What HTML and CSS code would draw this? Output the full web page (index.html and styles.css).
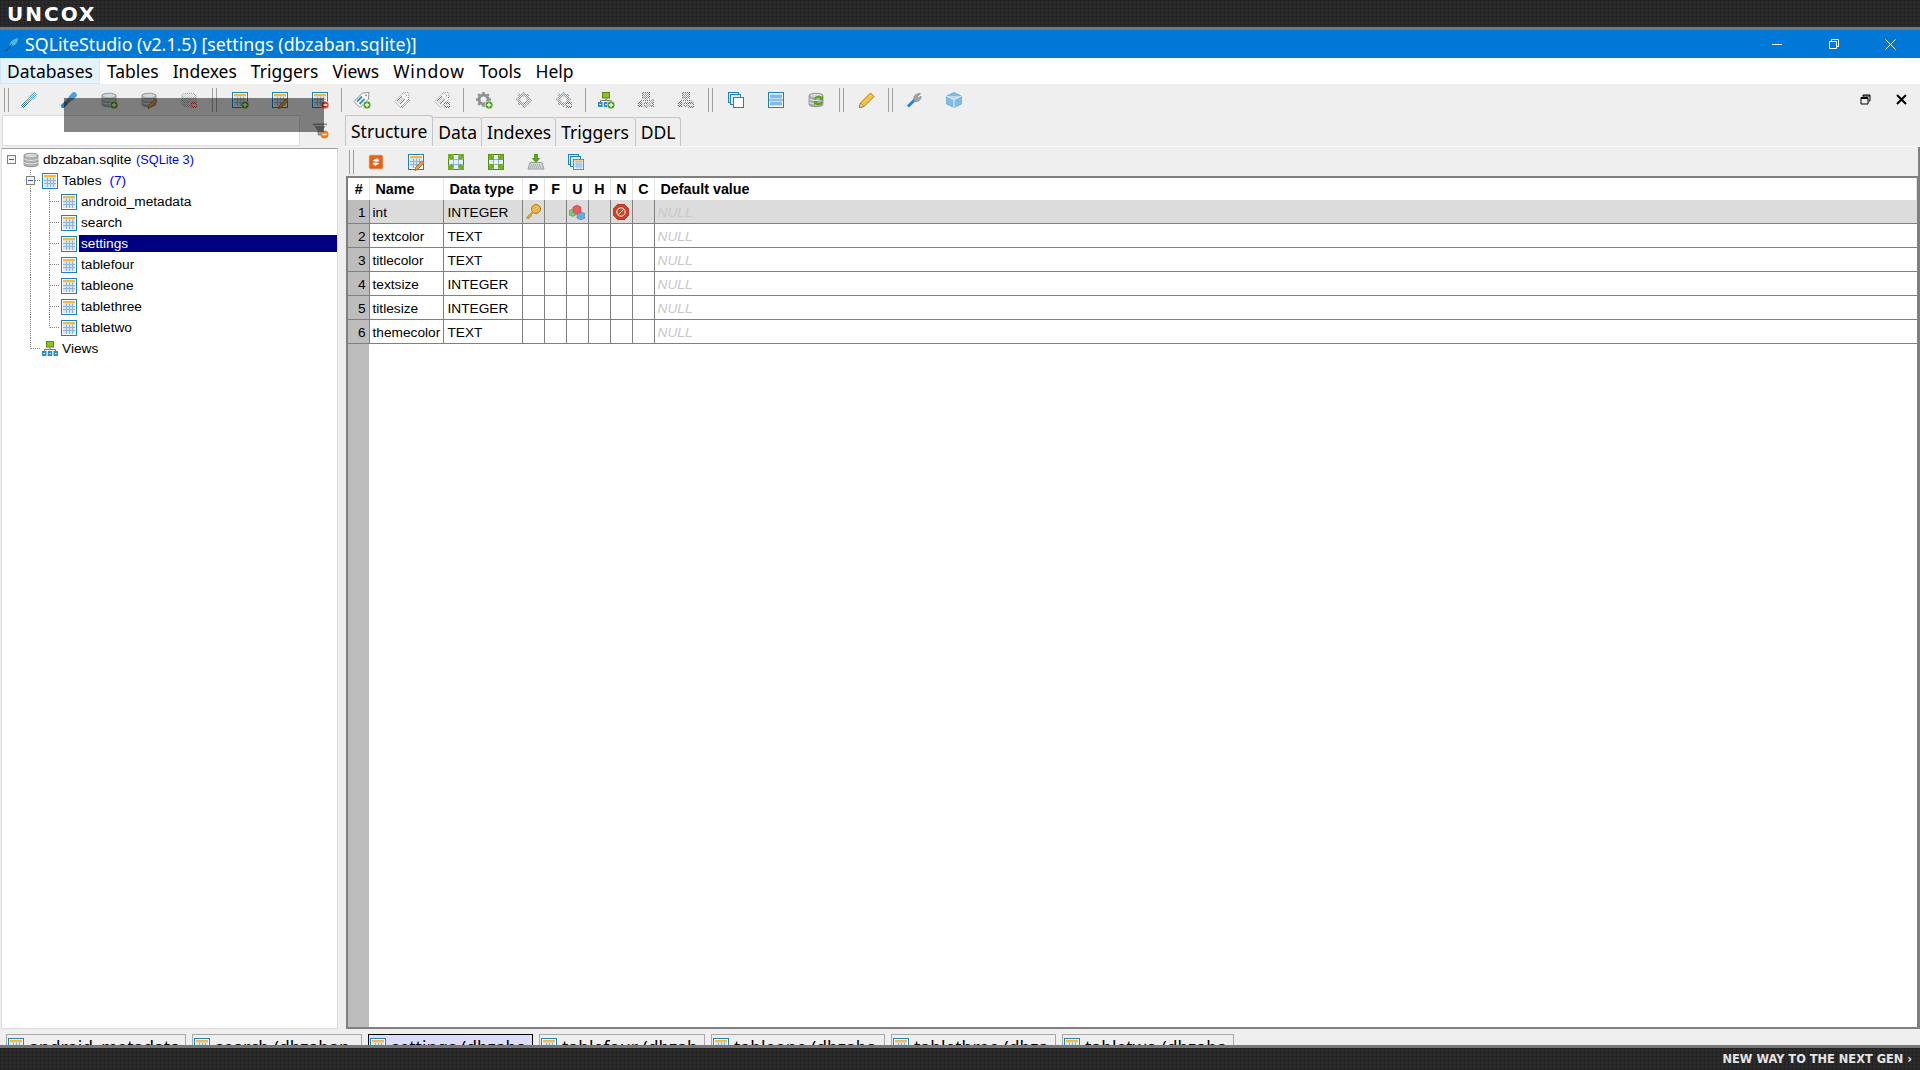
FILE: index.html
```html
<!DOCTYPE html>
<html>
<head>
<meta charset="utf-8">
<title>SQLiteStudio (v2.1.5) [settings (dbzaban.sqlite)]</title>
<link rel="stylesheet" href="styles.css">
</head>
<body>

<svg class="defs" width="0" height="0">
<defs>
<symbol id="table" viewBox="0 0 16 16">
  <rect x=".5" y=".5" width="15" height="15" fill="#fff" stroke="#1b83b8"/>
  <rect x="2" y="2" width="12" height="2.500" fill="#f4b93f"/>
  <path d="M2 4.500h12V14H2z" fill="#d6e6f5"/>
  <path d="M2 7.500h12M2 10.500h12M5.500 4.500V14M8.500 4.500V14M11.500 4.500V14" stroke="#8fb4d8" fill="none"/>
</symbol>
<symbol id="db" viewBox="0 0 16 16">
  <path d="M1 3.500C1 .5 15 .5 15 3.500v9c0 3-14 3-14 0z" fill="#a9adb0" stroke="#85898c" stroke-width=".8"/>
  <path d="M1 6.500c0 2.500 14 2.500 14 0M1 10c0 2.500 14 2.500 14 0" stroke="#e6e8e9" fill="none"/>
  <ellipse cx="8" cy="3.500" rx="6" ry="1.800" fill="#d5d8da"/>
</symbol>
<symbol id="view" viewBox="0 0 16 16">
  <rect x="4.500" y=".5" width="7" height="5.500" fill="#8cc21a" stroke="#5e8a0f"/>
  <path d="M8 6v3M2.500 10V8.500h11V10" stroke="#777" fill="none"/>
  <rect x="0" y="10" width="4.500" height="5" fill="#2f8ccb"/>
  <rect x="5.750" y="10" width="4.500" height="5" fill="#2f8ccb"/>
  <rect x="11.500" y="10" width="4.500" height="5" fill="#2f8ccb"/>
  <path d="M1.500 12.500h1.500M7.300 12.500h1.500M13 12.500h1.500" stroke="#fff"/>
</symbol>
<symbol id="tag" viewBox="0 0 16 16">
  <path d="M0 9.500 8.500 1 15 .5 14.500 7 6 15.500z" fill="#fff" stroke="#8b8f92"/>
  <path d="M3 9.500 8 4.500M5.500 12 10.500 7" stroke="#2f8ccb" stroke-width="1.800"/>
  <circle cx="12" cy="3.500" r="1" fill="#8b8f92"/>
</symbol>
<symbol id="gear" viewBox="0 0 16 16">
  <circle cx="7.500" cy="7.500" r="4.500" fill="none" stroke="#8e9194" stroke-width="3"/>
  <path d="M7.500 0v15M0 7.500h15M2.200 2.200 12.800 12.800M12.800 2.200 2.200 12.800" stroke="#8e9194" stroke-width="2.400" stroke-dasharray="2.400 10.200"/>
</symbol>
<symbol id="plug" viewBox="0 0 16 16">
  <path d="M2 14 5 11" stroke="#2d7fbd" stroke-width="4" stroke-linecap="round"/>
  <path d="M6 10 9 7" stroke="#84888b" stroke-width="4"/>
  <path d="M10.500 5.500 13 3" stroke="#4da0e0" stroke-width="5.500" stroke-linecap="round"/>
</symbol>
<symbol id="b-add" viewBox="0 0 16 16">
  <circle cx="13" cy="13" r="4" fill="#4a9a16" stroke="#fff" stroke-width=".6"/>
  <path d="M13 10.800v4.400M10.800 13h4.400" stroke="#fff" stroke-width="1.300"/>
</symbol>
<symbol id="b-del" viewBox="0 0 16 16">
  <circle cx="13" cy="13" r="4" fill="#e23b2a" stroke="#fff" stroke-width=".6"/>
  <path d="M10.800 13h4.400" stroke="#fff" stroke-width="1.500"/>
</symbol>
<symbol id="b-edit" viewBox="0 0 16 16">
  <path d="M7 16.500 7.500 13.500 14 7l2 2-6.500 6.500z" fill="#f0a42c" stroke="#8d5a14" stroke-width=".7"/>
  <path d="M14 7l2 2" stroke="#b66cc0" stroke-width="1.500"/>
</symbol>
<symbol id="b-orange-del" viewBox="0 0 16 16">
  <circle cx="11.500" cy="11.500" r="4" fill="#ee7a1e"/>
  <path d="M9.300 11.500h4.400" stroke="#fff" stroke-width="1.500"/>
</symbol>
<symbol id="wins" viewBox="0 0 16 16">
  <rect x=".5" y=".5" width="10" height="10" fill="#d9ecf8" stroke="#1b83b8"/>
  <rect x="2.500" y="2.500" width="10" height="10" fill="#d9ecf8" stroke="#1b83b8"/>
  <rect x="5.500" y="5.500" width="10" height="10" fill="#fff" stroke="#1b83b8"/>
</symbol>
<symbol id="split" viewBox="0 0 16 16">
  <rect x=".5" y=".5" width="15" height="15" fill="#fff" stroke="#1b83b8"/>
  <path d="M2 2.500h12v4H2zM2 9.500h12v4H2z" fill="#7fbde4"/>
  <path d="M1 8h14" stroke="#1b83b8"/>
</symbol>
<symbol id="dbsync" viewBox="0 0 16 16">
  <use href="#db"/>
  <path d="M6 7c1-4 6-4 8-2l1-1.500V8h-4l1.200-1.200C10.500 5.500 8 6 7.500 8zM15 10c-1 4-6 4-8 2l-1 1.500V9h4L8.800 10.200C10.500 11.500 13 11 13.500 9z" fill="#5aa51c"/>
</symbol>
<symbol id="pencil" viewBox="0 0 16 16">
  <path d="M.5 15.500 1.500 11 11.500 1 15 4.500 5 14.500z" fill="#f7c544" stroke="#b5761a"/>
  <path d="M.5 15.500 1.500 11 5 14.500z" fill="#f3dcae" stroke="#8d5a14" stroke-width=".6"/>
</symbol>
<symbol id="wrench" viewBox="0 0 16 16">
  <path d="M2 14.500 8.500 8" stroke="#2d86c9" stroke-width="3"/>
  <path d="M8 8.500C6.800 5 9.500 1 14.500 1.500L11.500 4.500l1 1.500 2.500-2c.5 3.500-3 6.500-6.200 5.200z" fill="#a4a7aa" stroke="#77797c" stroke-width=".6"/>
</symbol>
<symbol id="cube" viewBox="0 0 16 16">
  <path d="M8 .5 15.500 4v8L8 15.500.5 12V4z" fill="#7fbde4" stroke="#5ea5d3" stroke-width=".7"/>
  <path d="M.5 4 8 7.500 15.500 4" fill="#b5daf2" stroke="#e8f4fb"/>
  <path d="M8 7.500v8" stroke="#e8f4fb"/>
</symbol>
<symbol id="sync" viewBox="0 0 16 16">
  <rect x="1" y="1" width="14" height="14" rx="1.500" fill="#e4621a" stroke="#f6c48e" stroke-width=".7"/>
  <path d="M4.500 6.500 9.500 4v1.500h2l-1 2H7zM11.500 9.500 6.500 12v-1.500h-2l1-2H9z" fill="#fff"/>
</symbol>
<symbol id="grid" viewBox="0 0 16 16">
  <rect x=".5" y=".5" width="15" height="15" fill="#e3eef8" stroke="#4b8a12"/>
  <path d="M1 5.500h14M1 10.500h14M5.500 1v14M10.500 1v14" stroke="#8fb4d8"/>
</symbol>
<symbol id="corners-out" viewBox="0 0 16 16">
  <path d="M0 0h6L4.500 1.800 6 4 4 6 1.800 4.500 0 6zM16 0v6l-1.800-1.500L12 6l-2-2 1.500-2.200L10 0zM0 16v-6l1.800 1.500L4 10l2 2-1.500 2.200L6 16zM16 16h-6l1.500-1.800L10 12l2-2 2.200 1.500L16 10z" fill="#72ad1c"/>
</symbol>
<symbol id="corners-in" viewBox="0 0 16 16">
  <path d="M6 6H0l1.800-1.500L0 2 2 0l2.500 1.800L6 0zM10 6V0l1.500 1.800L14 0l2 2-1.800 2.500L16 6zM6 10v6l-1.500-1.800L2 16l-2-2 1.800-2.500L0 10zM10 10h6l-1.800 1.500L16 14l-2 2-2.500-1.800L10 16z" fill="#72ad1c"/>
</symbol>
<symbol id="keyboard" viewBox="0 0 16 16">
  <path d="M2 8.500h12l2 6.500H0z" fill="#d2d4d6" stroke="#8b8f92" stroke-width=".8"/>
  <path d="M3 11h10M2 13h12" stroke="#8b8f92" stroke-dasharray="1 1"/>
  <path d="M6 0h4v4h2.500L8 9 3.500 4H6z" fill="#5aa51c"/>
</symbol>
<symbol id="key" viewBox="0 0 16 16">
  <circle cx="11" cy="5" r="4.500" fill="#f2b84b" stroke="#b5761a"/>
  <circle cx="12" cy="4" r="1.200" fill="#fff3d6" stroke="#b5761a" stroke-width=".5"/>
  <path d="M8 8 1.500 14.500M3 13l1.500 1.500M5 11l1.500 1.500" stroke="#d9972d" stroke-width="2"/>
</symbol>
<symbol id="cubes" viewBox="0 0 16 16">
  <path d="M0 6.500 3.500 5 7 6.500V11l-3.500 1.500L0 11z" fill="#7ec27a" stroke="#4f8f4b" stroke-width=".5"/>
  <path d="M8 9.500l4-1.500 4 1.500V14l-4 2-4-2z" fill="#6ea9dc" stroke="#3d78ab" stroke-width=".5"/>
  <path d="M4 3l4-2 4 2V8l-4 2-4-2z" fill="#ea5a5f" stroke="#b8383d" stroke-width=".5"/>
</symbol>
<symbol id="nono" viewBox="0 0 16 16">
  <path d="M5 0h6l5 5v6l-5 5H5l-5-5V5z" fill="#d33f1e" stroke="#8c2710" stroke-width=".6"/>
  <circle cx="8" cy="8" r="4.200" fill="none" stroke="#fff" stroke-width="1"/>
  <path d="M5.500 10.500 10.500 5.500" stroke="#fff"/>
</symbol>
<symbol id="funnel" viewBox="0 0 16 16">
  <path d="M0 1h14L9 7v5H5V7z" fill="#9a9d9f" stroke="#6e7173" stroke-width=".7"/>
  <path d="M1 2.500h12" stroke="#e2e4e6"/>
</symbol>
<symbol id="feather" viewBox="0 0 16 16">
  <path d="M5 11C5 6 9 2 15 1c0 6-4 9-8 9z" fill="#53b6d9"/>
  <path d="M1 16 8 8" stroke="#103a55"/>
</symbol>
</defs>
</svg>

<div class="page">

<div class="band band_top"><span class="logo">UNCOX</span></div>

<div class="titlebar">
  <svg class="ti_ico"><use href="#feather"/></svg>
  <span class="ti_txt">SQLiteStudio (v2.1.5) [settings (dbzaban.sqlite)]</span>
  <div class="winbtns">
    <div class="winbtn"><svg width="10" height="10" viewBox="0 0 10 10"><path d="M0 5.500h10" stroke="#fff"/></svg></div>
    <div class="winbtn"><svg width="10" height="10" viewBox="0 0 10 10"><path d="M.5 2.500h7v7h-7zM2.500 2.500v-2h7v7h-2" fill="none" stroke="#fff"/></svg></div>
    <div class="winbtn"><svg width="11" height="11" viewBox="0 0 11 11"><path d="M.5.500l10 10M10.500.500l-10 10" stroke="#fff"/></svg></div>
  </div>
</div>

<div class="menubar">
  <div class="mnu mnu_on">Databases</div>
  <div class="mnu">Tables</div>
  <div class="mnu">Indexes</div>
  <div class="mnu">Triggers</div>
  <div class="mnu">Views</div>
  <div class="mnu mnu_w">Window</div>
  <div class="mnu">Tools</div>
  <div class="mnu">Help</div>
</div>

<div class="work">

  <div class="tbar">
    <i class="grip"></i>
    <div class="tb off"><svg><use href="#plug"/></svg></div>
    <div class="tb"><svg><use href="#plug"/></svg></div>
    <div class="tb"><svg><use href="#db"/><use href="#b-add"/></svg></div>
    <div class="tb"><svg><use href="#db"/><use href="#b-edit"/></svg></div>
    <div class="tb off"><svg><use href="#db"/><use href="#b-del"/></svg></div>
    <i class="grip gap"></i>
    <div class="tb"><svg><use href="#table"/><use href="#b-add"/></svg></div>
    <div class="tb"><svg><use href="#table"/><use href="#b-edit"/></svg></div>
    <div class="tb"><svg><use href="#table"/><use href="#b-del"/></svg></div>
    <i class="thin"></i>
    <div class="tb"><svg><use href="#tag"/><use href="#b-add"/></svg></div>
    <div class="tb off"><svg><use href="#tag"/><use href="#b-edit"/></svg></div>
    <div class="tb off"><svg><use href="#tag"/><use href="#b-del"/></svg></div>
    <i class="thin"></i>
    <div class="tb"><svg><use href="#gear"/><use href="#b-add"/></svg></div>
    <div class="tb off"><svg><use href="#gear"/><use href="#b-edit"/></svg></div>
    <div class="tb off"><svg><use href="#gear"/><use href="#b-del"/></svg></div>
    <i class="thin"></i>
    <div class="tb"><svg><use href="#view"/><use href="#b-add"/></svg></div>
    <div class="tb off"><svg><use href="#view"/><use href="#b-edit"/></svg></div>
    <div class="tb off"><svg><use href="#view"/><use href="#b-del"/></svg></div>
    <i class="grip gap gap_v"></i>
    <div class="tb"><svg><use href="#wins"/></svg></div>
    <div class="tb"><svg><use href="#split"/></svg></div>
    <div class="tb"><svg><use href="#dbsync"/></svg></div>
    <i class="grip gap"></i>
    <div class="tb"><svg><use href="#pencil"/></svg></div>
    <i class="grip gap gap_n"></i>
    <div class="tb"><svg><use href="#wrench"/></svg></div>
    <div class="tb"><svg><use href="#cube"/></svg></div>
    <div class="mdi">
      <div class="mdibtn"><svg width="11" height="11" viewBox="0 0 11 11"><path d="M3 2.500V1h7v6H8.500" fill="none" stroke="#000"/><path d="M1 3.500h7v6.500H1z" fill="none" stroke="#000"/><path d="M3 2h7M1 4.500h7" stroke="#000"/></svg></div>
      <div class="mdibtn"><svg width="11" height="11" viewBox="0 0 11 11"><path d="M1 1l9 9M10 1l-9 9" stroke="#000" stroke-width="2"/></svg></div>
    </div>
  </div>

  <div class="panes">

    <div class="left">
      <div class="flt">
        <div class="flt_in"></div>
        <svg class="flt_ico"><use href="#funnel"/><use href="#b-orange-del"/></svg>
      </div>
      <div class="tree">
        <div class="row"><span class="c"><b class="exp"></b></span><span class="c"><svg><use href="#db"/></svg></span><span class="lbl">dbzaban.sqlite <em class="em_db">(SQLite 3)</em></span></div>
        <div class="row"><span class="c"></span><span class="c tt"><b class="exp"></b></span><span class="c"><svg><use href="#table"/></svg></span><span class="lbl">Tables <em>(7)</em></span></div>
        <div class="row"><span class="c"></span><span class="c tv"></span><span class="c tt"></span><span class="c"><svg><use href="#table"/></svg></span><span class="lbl">android_metadata</span></div>
        <div class="row"><span class="c"></span><span class="c tv"></span><span class="c tt"></span><span class="c"><svg><use href="#table"/></svg></span><span class="lbl">search</span></div>
        <div class="row"><span class="c"></span><span class="c tv"></span><span class="c tt"></span><span class="c"><svg><use href="#table"/></svg></span><span class="lbl_sel">settings</span></div>
        <div class="row"><span class="c"></span><span class="c tv"></span><span class="c tt"></span><span class="c"><svg><use href="#table"/></svg></span><span class="lbl">tablefour</span></div>
        <div class="row"><span class="c"></span><span class="c tv"></span><span class="c tt"></span><span class="c"><svg><use href="#table"/></svg></span><span class="lbl">tableone</span></div>
        <div class="row"><span class="c"></span><span class="c tv"></span><span class="c tt"></span><span class="c"><svg><use href="#table"/></svg></span><span class="lbl">tablethree</span></div>
        <div class="row"><span class="c"></span><span class="c tv"></span><span class="c te"></span><span class="c"><svg><use href="#table"/></svg></span><span class="lbl">tabletwo</span></div>
        <div class="row"><span class="c"></span><span class="c te"></span><span class="c"><svg><use href="#view"/></svg></span><span class="lbl">Views</span></div>
      </div>
    </div>

    <div class="right">
      <div class="tabs">
        <div class="tab tab_on">Structure</div>
        <div class="tab">Data</div>
        <div class="tab">Indexes</div>
        <div class="tab tab_tr">Triggers</div>
        <div class="tab">DDL</div>
      </div>
      <div class="tbar2">
        <i class="grip"></i>
        <div class="tb"><svg><use href="#sync"/></svg></div>
        <div class="tb"><svg><use href="#table"/><use href="#b-edit"/></svg></div>
        <div class="tb"><svg><use href="#grid"/><use href="#corners-out"/></svg></div>
        <div class="tb"><svg><use href="#grid"/><use href="#corners-in"/></svg></div>
        <div class="tb"><svg><use href="#keyboard"/></svg></div>
        <div class="tb"><svg><use href="#wins"/><use href="#table" x="5" y="5" width="11" height="11"/></svg></div>
      </div>
      <div class="frame">
        <table class="cols">
          <colgroup><col class="c_n"><col class="c_name"><col class="c_type"><col class="c_f"><col class="c_f"><col class="c_f"><col class="c_f"><col class="c_f"><col class="c_f"><col></colgroup>
          <thead><tr><th class="ctr">#</th><th>Name</th><th>Data type</th><th class="ctr">P</th><th class="ctr">F</th><th class="ctr">U</th><th class="ctr">H</th><th class="ctr">N</th><th class="ctr">C</th><th>Default value</th></tr></thead>
          <tbody>
            <tr class="cur"><td class="n">1</td><td>int</td><td>INTEGER</td><td class="ic"><svg><use href="#key"/></svg></td><td></td><td class="ic"><svg><use href="#cubes"/></svg></td><td></td><td class="ic"><svg><use href="#nono"/></svg></td><td></td><td class="nul">NULL</td></tr>
            <tr><td class="n">2</td><td>textcolor</td><td>TEXT</td><td></td><td></td><td></td><td></td><td></td><td></td><td class="nul">NULL</td></tr>
            <tr><td class="n">3</td><td>titlecolor</td><td>TEXT</td><td></td><td></td><td></td><td></td><td></td><td></td><td class="nul">NULL</td></tr>
            <tr><td class="n">4</td><td>textsize</td><td>INTEGER</td><td></td><td></td><td></td><td></td><td></td><td></td><td class="nul">NULL</td></tr>
            <tr><td class="n">5</td><td>titlesize</td><td>INTEGER</td><td></td><td></td><td></td><td></td><td></td><td></td><td class="nul">NULL</td></tr>
            <tr><td class="n">6</td><td>themecolor</td><td>TEXT</td><td></td><td></td><td></td><td></td><td></td><td></td><td class="nul">NULL</td></tr>
          </tbody>
        </table>
      </div>
    </div>

  </div>

  <div class="wtabs">
    <div class="wt wt1"><svg><use href="#table"/></svg><span>android_metadata</span></div>
    <div class="wt wt2"><svg><use href="#table"/></svg><span>search (dbzaban</span></div>
    <div class="wt wt3 wt_on"><svg><use href="#table"/></svg><span>settings (dbzaba</span></div>
    <div class="wt wt4"><svg><use href="#table"/></svg><span>tablefour (dbzab</span></div>
    <div class="wt wt5"><svg><use href="#table"/></svg><span>tableone (dbzaba</span></div>
    <div class="wt wt6"><svg><use href="#table"/></svg><span>tablethree (dbza</span></div>
    <div class="wt wt7"><svg><use href="#table"/></svg><span>tabletwo (dbzaba</span></div>
  </div>

</div>

<div class="band band_btm"><span class="tagline">NEW WAY TO THE NEXT GEN ›</span></div>

<div class="shade"></div>

</div>

</body>
</html>
```
FILE: styles.css
```css
html, body {margin:0;padding:0;height:100%;overflow:hidden}
body {font-family:"Liberation Sans",Arial,sans-serif;font-size:13.7px;color:#000;background:#efefef}

.defs {position:absolute}
symbol {overflow:visible}
.page {position:relative;height:1070px;display:flex;flex-direction:column;overflow:hidden}

.band {flex:none;background-color:#2c2c2c;
  background-image:linear-gradient(#232323 1px,transparent 1px),linear-gradient(90deg,#232323 1px,transparent 1px);
  background-size:4px 4px;color:#fff;display:flex;align-items:center}
.band_top {height:27px;border-bottom:3px solid #777;padding-left:7px}
.band_btm {height:22px;border-top:3px solid #777;justify-content:flex-end;padding-right:8px}
.logo {font-family:"DejaVu Sans",sans-serif;font-weight:bold;font-size:20px;letter-spacing:2px;line-height:1}
.tagline {font-family:"DejaVu Sans",sans-serif;font-weight:bold;font-size:11.4px;color:#e4e4e4;white-space:nowrap}

.titlebar {flex:none;height:28px;background:#0078d7;color:#fff;display:flex;align-items:center;padding-left:5px}
.ti_ico {width:14px;height:16px;flex:none}
.ti_txt {font-family:"Noto Sans",sans-serif;font-size:17.8px;margin-left:6px;white-space:nowrap}
.winbtns {margin-left:auto;display:flex;padding-right:1px}
.winbtn {width:57px;height:28px;display:flex;align-items:center;justify-content:center}

.menubar {flex:none;height:26px;background:#fff;display:flex;font-family:"Noto Sans",sans-serif;font-size:17.5px}
.mnu {padding:0 6px;line-height:25px;border:1px solid transparent;white-space:nowrap}
.mnu_on {background:#e5f3ff;border-color:#cce8ff}
.mnu_w {letter-spacing:.9px}

.work {flex:1;min-height:0;display:flex;flex-direction:column;background:#efefef}

.tbar {flex:none;height:31px;display:flex;align-items:center;padding-left:3px}
.tb {width:40px;height:28px;flex:none;display:flex;align-items:center;justify-content:center}
.tb svg {width:16px;height:16px;overflow:visible}
.off svg {-webkit-mask-image:conic-gradient(#000 25%,transparent 0 50%,#000 0 75%,transparent 0);mask-image:conic-gradient(#000 25%,transparent 0 50%,#000 0 75%,transparent 0);
  -webkit-mask-size:2px 2px;mask-size:2px 2px}
.grip {flex:none;width:3px;height:24px;border-left:1px solid #a0a0a0;border-right:1px solid #a0a0a0;margin-left:1px}
.grip.gap {margin:0 3px}
.grip.gap_v {margin:0 3px 0 2px}
.grip.gap_n {margin:0 1px}
.thin {flex:none;width:1px;height:24px;background:#a0a0a0;margin:0 .5px}
.mdi {margin-left:auto;display:flex;padding-right:1px}
.mdibtn {width:36px;height:28px;display:flex;align-items:center;justify-content:center}

.panes {flex:1;min-height:0;display:flex}

.left {flex:none;width:342px;display:flex;flex-direction:column;padding-bottom:5px;box-sizing:border-box}
.flt {flex:none;height:33px;display:flex;align-items:flex-start;padding-left:2px}
.flt_in {width:298px;height:31px;background:#fff;box-sizing:border-box;border:1px solid #dcdcdc}
.flt_ico {width:16px;height:16px;margin:8px 0 0 13px;overflow:visible}
.tree {flex:1;margin:0 4px 0 1px;background:#fff;border:1px solid #dcdcdc;border-top-color:#a0a0a0}

.row {height:21px;display:flex;align-items:center}
.c {flex:none;width:19px;height:100%;display:flex;align-items:center;justify-content:center;
  --dot:repeating-linear-gradient(#808080 0 1px,transparent 1px 2px);
  --hdot:repeating-linear-gradient(90deg,#808080 0 1px,transparent 1px 2px)}
.c svg {width:16px;height:16px}
.tv {background:var(--dot) no-repeat 9px 0/1px 100%}
.tt {background:var(--dot) no-repeat 9px 0/1px 100%,var(--hdot) no-repeat 10px 50%/9px 1px}
.te {background:var(--dot) no-repeat 9px 0/1px 50%,var(--hdot) no-repeat 10px 50%/9px 1px}
.exp {width:9px;height:9px;box-sizing:border-box;border:1px solid #808080;background:linear-gradient(#3a5da8,#3a5da8) no-repeat center/5px 1px,#f4f4f4}
.lbl {margin-left:3px;white-space:nowrap}
.lbl em {font-style:normal;color:#0000ff;margin-left:4px}
.lbl em.em_db {margin-left:1px;font-size:12.7px}
.lbl_sel {flex:1;margin-left:1px;height:17px;line-height:17px;padding-left:2px;background:#000080;color:#fff}

.right {flex:1;min-width:0;display:flex;flex-direction:column;padding-bottom:5px}

.tabs {flex:none;height:31px;display:flex;align-items:flex-end;padding-left:3px;border-bottom:1px solid #fafafa;font-family:"Noto Sans",sans-serif;font-size:17.5px}
.tab {height:28px;line-height:29px;padding:0 4px 0 5px;border:1px solid #c4c4c4;border-bottom:0;border-left:0;border-radius:0 3px 0 0;white-space:nowrap}
.tab_on {height:30px;line-height:30px;padding:0 5px 0 5px;border-left:1px solid #c4c4c4}
.tab_tr {padding-right:6px}

.tbar2 {flex:none;height:29px;display:flex;align-items:center;padding-left:6px;border-right:2px solid #808080}
.tbar2 .tb {width:40px}
.tbar2 .grip {margin-right:2px}

.frame {flex:1;min-height:0;margin:0 0 0 4px;border:2px solid #808080;border-right-width:3px;background:linear-gradient(90deg,#bdbdbd 21px,#fff 21px)}

.cols {width:100%;border-collapse:collapse;table-layout:fixed;background:#fff}
.c_n {width:21px}
.c_name {width:74px}
.c_type {width:79px}
.c_f {width:22px}
.cols th {height:22px;padding:0 0 0 6px;box-sizing:border-box;text-align:left;font-weight:bold;font-size:14.3px;border-right:1px solid #e4e4e4;background:#fff;white-space:nowrap}
.cols th.ctr {text-align:center;padding:0 0 0 1px}
.cols td {height:21px;padding:2px 0 0 3px;border-right:1px solid #808080;border-bottom:1px solid #808080;white-space:nowrap;overflow:hidden}
.cols td:nth-child(3) {padding-left:4px}
.cols td.n {text-align:right;padding:2px 3px 0 0;background:#bdbdbd}
.cols td.ic {padding:0;text-align:center;line-height:0}
.cols td svg {width:16px;height:16px}
.cols td.nul {font-style:italic;color:#c8c8c8}
.cols td:last-child {border-right:0}
.cur td {background:#dcdcdc}

.wtabs {flex:none;height:11px;overflow:hidden;display:flex;gap:6px;padding-left:6px;font-family:"Noto Sans",sans-serif;font-size:17.5px}
.wt {box-sizing:border-box;height:26px;border:1px solid #a8a8a8;border-bottom:0;display:flex;padding:3px 0 0 1px;white-space:nowrap;overflow:hidden}
.wt svg {width:16px;height:16px;flex:none}
.wt span {margin-left:5px;line-height:18px}
.wt_on {background:#dcdcff;border-color:#000}
.wt1 {width:180px}
.wt2 {width:170px}
.wt3 {width:165px}
.wt4 {width:166px}
.wt5 {width:174px}
.wt6 {width:165px}
.wt7 {width:172px}

.shade {position:absolute;left:64px;top:98px;width:260px;height:34px;background:rgba(0,0,0,.48)}
```
